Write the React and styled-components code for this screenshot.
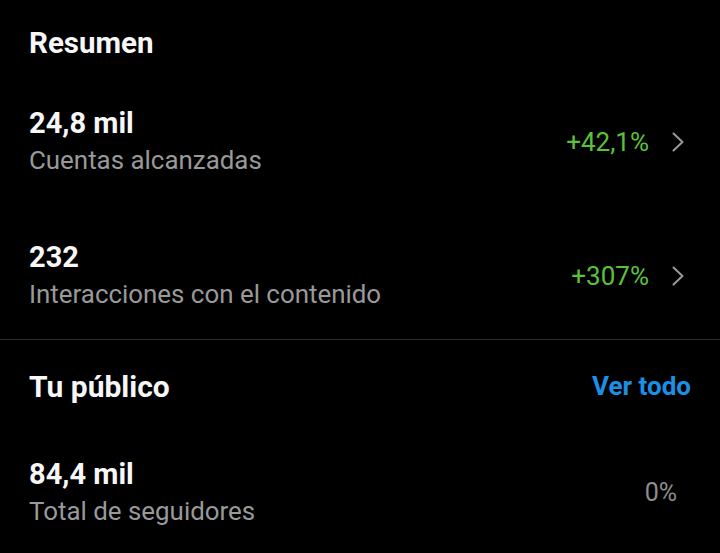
import React from "react";
import styled, { createGlobalStyle } from "styled-components";

const Global = createGlobalStyle`
  html, body { margin: 0; padding: 0; background: #000; }
  body { font-family: Roboto, "Liberation Sans", Arial, sans-serif; color: #f5f5f5; -webkit-font-smoothing: antialiased; }
`;

const Page = styled.div`
  width: 720px;
  height: 553px;
  background: #000;
  overflow: hidden;
`;

const Section = styled.section`
  padding: ${(p) => p.$pad};
  border-bottom: ${(p) => (p.$divider ? "1px solid #2b2b2b" : "none")};
`;

const HeaderRow = styled.div`
  display: flex;
  align-items: center;
  justify-content: space-between;
  padding-right: 29px;
`;

const Title = styled.h2`
  margin: 0;
  font-size: ${(p) => p.$size || 29.5}px;
  line-height: 34px;
  font-weight: 700;
  color: #f7f7f7;
`;

const LinkText = styled.a`
  font-size: 26px;
  line-height: 34px;
  font-weight: 700;
  color: #1b90e4;
  text-decoration: none;
  margin-top: -3px;
`;

const List = styled.div`
  display: flex;
  flex-direction: column;
  gap: 61px;
  margin-top: ${(p) => p.$top}px;
`;

const Row = styled.div`
  display: flex;
  align-items: center;
  justify-content: space-between;
  padding-right: ${(p) => p.$right}px;
`;

const Info = styled.div`
  display: flex;
  flex-direction: column;
`;

const Value = styled.div`
  font-size: 29px;
  line-height: 36px;
  font-weight: 700;
  color: #f7f7f7;
`;

const Label = styled.div`
  margin-top: 1px;
  font-size: 25.9px;
  line-height: 36px;
  font-weight: 400;
  color: #999999;
`;

const Trend = styled.div`
  display: flex;
  align-items: center;
  gap: 23px;
`;

const Change = styled.span`
  font-size: ${(p) => (p.$neutral ? 25 : 26)}px;
  line-height: 30px;
  color: ${(p) => (p.$neutral ? "#8e8e8e" : "#5cc13a")};
`;

const Chevron = () => (
  <svg width="12" height="20" viewBox="0 0 12 20" fill="none">
    <polyline points="1.5,1.5 10.5,10 1.5,18.5" stroke="#9a9a9a" strokeWidth="2" strokeLinecap="round" strokeLinejoin="round" />
  </svg>
);

const summary = [
  { value: "24,8 mil", label: "Cuentas alcanzadas", change: "+42,1%" },
  { value: "232", label: "Interacciones con el contenido", change: "+307%" },
];

export default function App() {
  return (
    <Page>
      <Global />
      <Section $pad="26px 0 27px 29px" $divider>
        <Title>Resumen</Title>
        <List $top={45}>
          {summary.map((s) => (
            <Row key={s.label} $right={36}>
              <Info>
                <Value>{s.value}</Value>
                <Label>{s.label}</Label>
              </Info>
              <Trend>
                <Change>{s.change}</Change>
                <Chevron />
              </Trend>
            </Row>
          ))}
        </List>
      </Section>
      <Section $pad="30px 0 0 29px">
        <HeaderRow>
          <Title $size={30}>Tu público</Title>
          <LinkText href="#">Ver todo</LinkText>
        </HeaderRow>
        <List $top={52}>
          <Row $right={43}>
            <Info>
              <Value>84,4 mil</Value>
              <Label>Total de seguidores</Label>
            </Info>
            <Change $neutral>0%</Change>
          </Row>
        </List>
      </Section>
    </Page>
  );
}
